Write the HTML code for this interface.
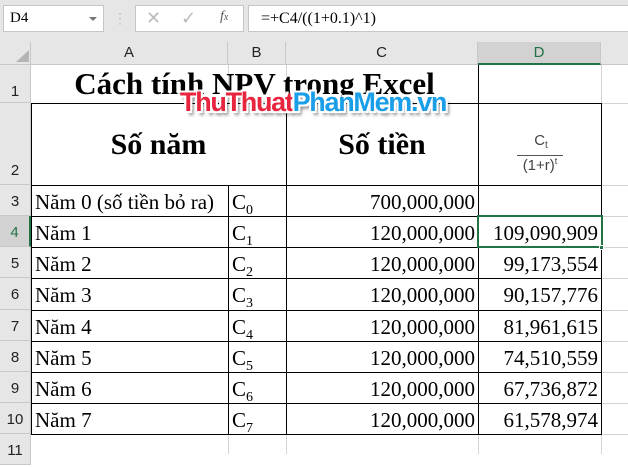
<!DOCTYPE html>
<html><head><meta charset="utf-8"><style>
*{margin:0;padding:0;box-sizing:border-box}
body{width:628px;height:452px;overflow:hidden;background:#fff;position:relative;font-family:"Liberation Serif",serif}
.a{position:absolute}
.top{left:0;top:0;width:628px;height:42px;background:#e6e6e6}
.box{background:#fff;border:1px solid #c6c6c6}
.colh{top:42px;height:23px;background:#e6e6e6;border-right:1px solid #c8c8c8;border-bottom:1px solid #c8c8c8;font:15px "Liberation Sans",sans-serif;color:#222;text-align:center;line-height:22px}
.rowh{left:0;width:31px;background:#e6e6e6;border-bottom:1px solid #c8c8c8;border-right:1px solid #c8c8c8;font:15px "Liberation Sans",sans-serif;color:#222;text-align:center}
.h{height:1px;background:#000}
.v{width:1px;background:#000}
.gh{height:1px;background:#d4d4d4}
.gv{width:1px;background:#d4d4d4}
.t{font-size:21px;color:#000;white-space:nowrap}
sub{font-size:14px;vertical-align:-5px}
</style></head><body>
<div class="a top"></div>
<div class="a box" style="left:3px;top:5px;width:101px;height:27px;font:15px 'Liberation Serif',serif;line-height:25px;padding-left:6px">D4</div>
<div class="a" style="left:89px;top:17px;width:0;height:0;border-left:4px solid transparent;border-right:4px solid transparent;border-top:4px solid #777"></div>
<div class="a" style="left:118px;top:11px;color:#aaa;font:12px sans-serif;line-height:5px">·<br>·<br>·</div>
<div class="a box" style="left:135px;top:5px;width:109px;height:27px"></div>
<div class="a" style="left:146px;top:8px;color:#bbb;font:18px 'Liberation Sans',sans-serif">✕</div>
<div class="a" style="left:181px;top:8px;color:#bbb;font:18px 'DejaVu Sans',sans-serif">✓</div>
<div class="a" style="left:220px;top:9px;color:#555;font:italic 14px 'Liberation Serif',serif">f<span style="font-size:10px">x</span></div>
<div class="a box" style="left:248px;top:5px;width:390px;height:27px;font:16px 'Liberation Serif',serif;line-height:25px;padding-left:12px">=+C4/((1+0.1)^1)</div>

<div class="a" style="left:0;top:42px;width:31px;height:23px;background:#e6e6e6;border-right:1px solid #c8c8c8;border-bottom:1px solid #c8c8c8"></div>
<div class="a" style="left:16px;top:50px;width:0;height:0;border-left:13px solid transparent;border-bottom:12px solid #b5b5b5"></div>
<div class="a colh" style="left:31px;width:197px">A</div>
<div class="a colh" style="left:228px;width:58px">B</div>
<div class="a colh" style="left:286px;width:192px">C</div>
<div class="a colh" style="left:478px;width:123px;background:#d2d2d2;border-bottom:2px solid #217346;color:#217346">D</div>
<div class="a colh" style="left:601px;width:40px"></div>

<div class="a rowh" style="top:65px;height:38px;line-height:54px">1</div>
<div class="a rowh" style="top:103px;height:82px;line-height:136px">2</div>
<div class="a rowh" style="top:185px;height:31px;line-height:33px">3</div>
<div class="a rowh" style="top:216px;height:31px;line-height:33px;background:#d2d2d2;color:#217346;border-right:2px solid #217346">4</div>
<div class="a rowh" style="top:247px;height:31px;line-height:33px">5</div>
<div class="a rowh" style="top:278px;height:32px;line-height:33px">6</div>
<div class="a rowh" style="top:310px;height:31px;line-height:33px">7</div>
<div class="a rowh" style="top:341px;height:31px;line-height:33px">8</div>
<div class="a rowh" style="top:372px;height:31px;line-height:33px">9</div>
<div class="a rowh" style="top:403px;height:31px;line-height:33px">10</div>
<div class="a rowh" style="top:434px;height:31px;line-height:33px">11</div>

<div class="a gv" style="left:228px;top:65px;height:38px"></div>
<div class="a gv" style="left:286px;top:65px;height:38px"></div>
<div class="a gv" style="left:228px;top:434px;height:20px"></div>
<div class="a gv" style="left:286px;top:434px;height:20px"></div>
<div class="a gv" style="left:478px;top:434px;height:20px"></div>
<div class="a gv" style="left:601px;top:434px;height:20px"></div>
<div class="a gv" style="left:601px;top:65px;height:38px"></div>
<div class="a gh" style="left:601px;top:103px;width:30px"></div>
<div class="a gh" style="left:601px;top:185px;width:30px"></div>
<div class="a gh" style="left:601px;top:216px;width:30px"></div>
<div class="a gh" style="left:601px;top:247px;width:30px"></div>
<div class="a gh" style="left:601px;top:278px;width:30px"></div>
<div class="a gh" style="left:601px;top:310px;width:30px"></div>
<div class="a gh" style="left:601px;top:341px;width:30px"></div>
<div class="a gh" style="left:601px;top:372px;width:30px"></div>
<div class="a gh" style="left:601px;top:403px;width:30px"></div>
<div class="a gh" style="left:601px;top:434px;width:30px"></div>

<div class="a h" style="left:31px;top:103px;width:571px"></div>
<div class="a h" style="left:31px;top:185px;width:571px"></div>
<div class="a h" style="left:31px;top:216px;width:571px"></div>
<div class="a h" style="left:31px;top:247px;width:571px"></div>
<div class="a h" style="left:31px;top:278px;width:571px"></div>
<div class="a h" style="left:31px;top:310px;width:571px"></div>
<div class="a h" style="left:31px;top:341px;width:571px"></div>
<div class="a h" style="left:31px;top:372px;width:571px"></div>
<div class="a h" style="left:31px;top:403px;width:571px"></div>
<div class="a h" style="left:31px;top:434px;width:571px"></div>
<div class="a v" style="left:31px;top:103px;height:332px"></div>
<div class="a v" style="left:228px;top:185px;height:250px"></div>
<div class="a v" style="left:286px;top:103px;height:332px"></div>
<div class="a v" style="left:478px;top:65px;height:370px"></div>
<div class="a v" style="left:601px;top:103px;height:332px"></div>

<div class="a t" style="left:31px;top:66px;width:447px;text-align:center;font-weight:bold;font-size:31px">Cách tính NPV trong Excel</div>
<div class="a t" style="left:31px;top:128px;width:255px;text-align:center;font-weight:bold;font-size:30px">Số năm</div>
<div class="a t" style="left:286px;top:128px;width:192px;text-align:center;font-weight:bold;font-size:30px">Số tiền</div>
<div class="a" style="left:516px;top:132px;width:50px;text-align:center;font:15px 'Liberation Sans',sans-serif;color:#444">C<sub style="font-size:10px;vertical-align:-3px">t</sub></div>
<div class="a" style="left:517px;top:155px;width:46px;height:1px;background:#555"></div>
<div class="a" style="left:514px;top:156px;width:52px;text-align:center;font:15px 'Liberation Sans',sans-serif;color:#444">(1+r)<sup style="font-size:9px">t</sup></div>

<div class="a t" style="left:35px;top:190px">Năm 0 (số tiền bỏ ra)</div>
<div class="a t" style="left:35px;top:221px">Năm 1</div>
<div class="a t" style="left:35px;top:252px">Năm 2</div>
<div class="a t" style="left:35px;top:283px">Năm 3</div>
<div class="a t" style="left:35px;top:315px">Năm 4</div>
<div class="a t" style="left:35px;top:346px">Năm 5</div>
<div class="a t" style="left:35px;top:377px">Năm 6</div>
<div class="a t" style="left:35px;top:408px">Năm 7</div>

<div class="a t" style="left:232px;top:190px">C<sub>0</sub></div>
<div class="a t" style="left:232px;top:221px">C<sub>1</sub></div>
<div class="a t" style="left:232px;top:252px">C<sub>2</sub></div>
<div class="a t" style="left:232px;top:283px">C<sub>3</sub></div>
<div class="a t" style="left:232px;top:315px">C<sub>4</sub></div>
<div class="a t" style="left:232px;top:346px">C<sub>5</sub></div>
<div class="a t" style="left:232px;top:377px">C<sub>6</sub></div>
<div class="a t" style="left:232px;top:408px">C<sub>7</sub></div>

<div class="a t" style="left:286px;top:190px;width:189px;text-align:right">700,000,000</div>
<div class="a t" style="left:286px;top:221px;width:189px;text-align:right">120,000,000</div>
<div class="a t" style="left:286px;top:252px;width:189px;text-align:right">120,000,000</div>
<div class="a t" style="left:286px;top:283px;width:189px;text-align:right">120,000,000</div>
<div class="a t" style="left:286px;top:315px;width:189px;text-align:right">120,000,000</div>
<div class="a t" style="left:286px;top:346px;width:189px;text-align:right">120,000,000</div>
<div class="a t" style="left:286px;top:377px;width:189px;text-align:right">120,000,000</div>
<div class="a t" style="left:286px;top:408px;width:189px;text-align:right">120,000,000</div>

<div class="a t" style="left:478px;top:221px;width:120px;text-align:right">109,090,909</div>
<div class="a t" style="left:478px;top:252px;width:120px;text-align:right">99,173,554</div>
<div class="a t" style="left:478px;top:283px;width:120px;text-align:right">90,157,776</div>
<div class="a t" style="left:478px;top:315px;width:120px;text-align:right">81,961,615</div>
<div class="a t" style="left:478px;top:346px;width:120px;text-align:right">74,510,559</div>
<div class="a t" style="left:478px;top:377px;width:120px;text-align:right">67,736,872</div>
<div class="a t" style="left:478px;top:408px;width:120px;text-align:right">61,578,974</div>

<div class="a" style="left:477px;top:215px;width:126px;height:33px;border:2px solid #217346"></div>
<div class="a" style="left:599px;top:245px;width:5px;height:5px;background:#217346;border:1px solid #fff"></div>

<div class="a" style="left:180px;top:87px;font:bold 27px 'Liberation Sans',sans-serif;letter-spacing:-1.3px;white-space:nowrap;text-shadow:2px 2px 0 #fff,-2px -2px 0 #fff,2px -2px 0 #fff,-2px 2px 0 #fff,3px 4px 3px rgba(0,0,0,.5)"><span style="color:#e8253f">ThuThuat</span><span style="color:#1a9ee8">PhanMem.vn</span></div>
</body></html>
